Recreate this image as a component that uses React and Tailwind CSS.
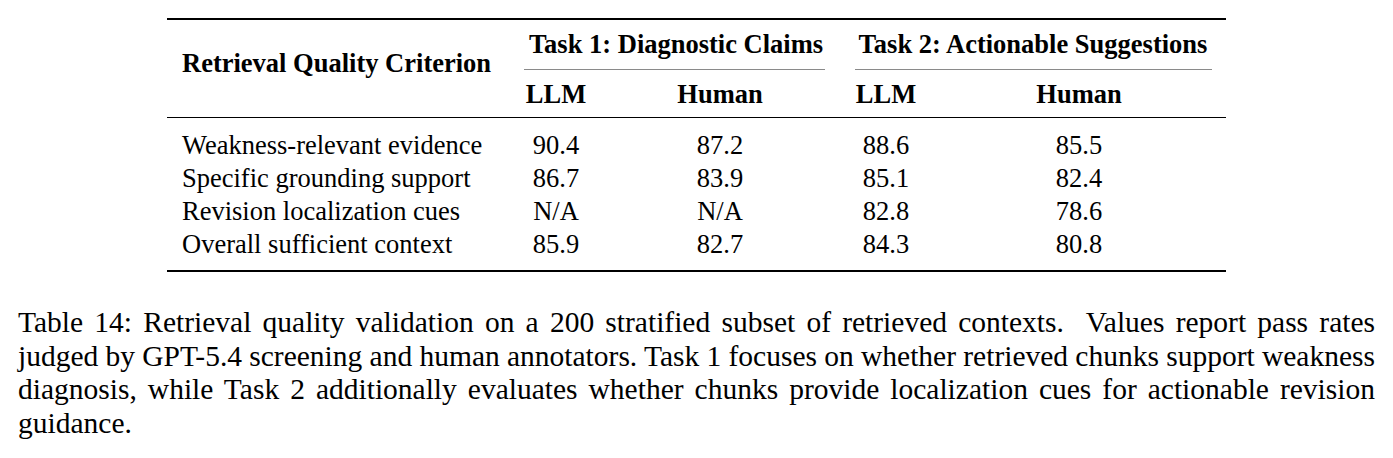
// Tabla 14 — validación de la calidad de recuperación, con su leyenda.

const FILAS = [
  ["Weakness-relevant evidence", "90.4", "87.2", "88.6", "85.5"],
  ["Specific grounding support", "86.7", "83.9", "85.1", "82.4"],
  ["Revision localization cues", "N/A", "N/A", "82.8", "78.6"],
  ["Overall sufficient context", "85.9", "82.7", "84.3", "80.8"],
];

const LINEAS = [
  "Table 14: Retrieval quality validation on a 200 stratified subset of retrieved contexts.\u00a0 Values report pass rates",
  "judged by GPT-5.4 screening and human annotators. Task 1 focuses on whether retrieved chunks support weakness",
  "diagnosis, while Task 2 additionally evaluates whether chunks provide localization cues for actionable revision",
];

function Grupo({ titulo, anchos, regla }) {
  return (
    <div className="flex flex-col" style={{ width: anchos[0] + anchos[1] }}>
      <div className="h-[49px] pt-[9px] text-center whitespace-nowrap">{titulo}</div>
      <div className={`h-px bg-[#8a8a8a] ${regla}`} />
      <div className="flex h-[47px] pt-[9px]">
        <div className="text-center" style={{ width: anchos[0] }}>LLM</div>
        <div className="text-center" style={{ width: anchos[1] }}>Human</div>
      </div>
    </div>
  );
}

export default function App() {
  return (
    <div className="w-[1393px] h-[458px] bg-white text-black font-[family-name:Liberation_Serif,serif] overflow-hidden">
      {/* Tabla */}
      <div className="pt-[18px] pl-[167px]">
        <div className="w-[1059px] text-[26.5px] leading-[30px]">
          <div className="h-[2px] bg-black" />
          <div className="flex font-bold">
            <div className="w-[345px] pl-[15px] pt-[28px]">Retrieval Quality Criterion</div>
            <Grupo titulo="Task 1: Diagnostic Claims" anchos={[88, 240]} regla="ml-[12px] mr-[15px]" />
            <Grupo titulo="Task 2: Actionable Suggestions" anchos={[92, 294]} regla="ml-[15px] mr-[14px]" />
          </div>
          <div className="h-px bg-black" />
          <div className="pt-[11px] pb-[9px] leading-[33px]">
            {FILAS.map((f) => (
              <div key={f[0]} className="grid grid-cols-[345px_88px_240px_92px_294px]">
                <div className="pl-[15px]">{f[0]}</div>
                {f.slice(1).map((v, i) => (
                  <div key={i} className="text-center">{v}</div>
                ))}
              </div>
            ))}
          </div>
          <div className="h-[2px] bg-black" />
        </div>
      </div>

      {/* Leyenda */}
      <div className="mt-[34px] px-[18px] text-[29.5px] leading-[33.5px]">
        {LINEAS.map((l, i) => (
          <div key={i} className={`text-justify [text-align-last:justify] ${i === 1 ? "[word-spacing:-1px]" : ""}`}>
            {l}
          </div>
        ))}
        <div>guidance.</div>
      </div>
    </div>
  );
}
